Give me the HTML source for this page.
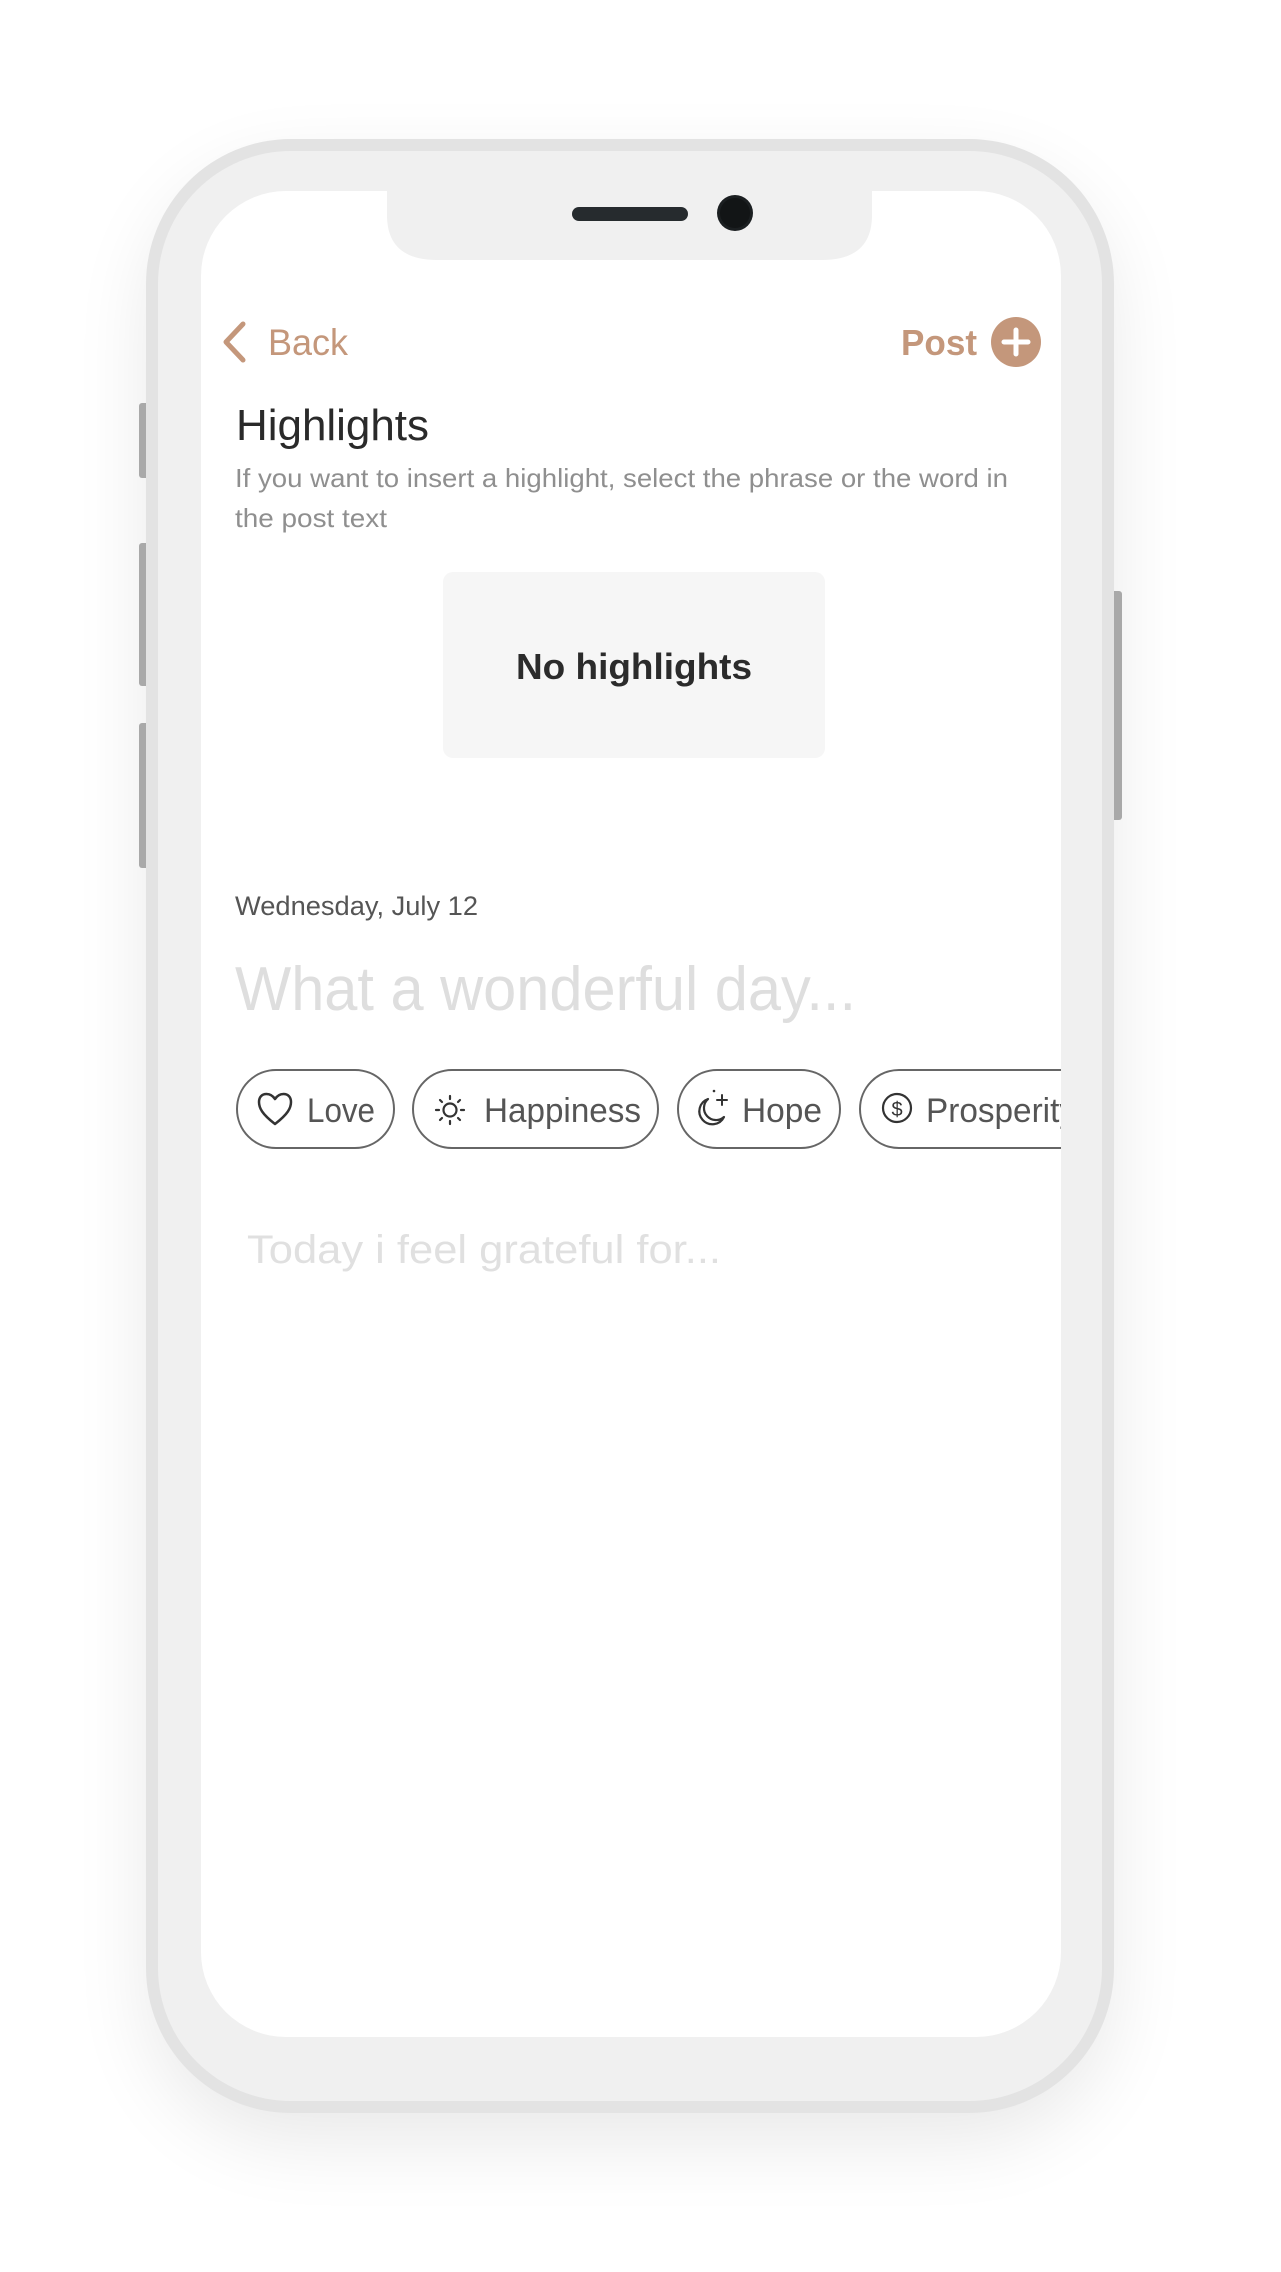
<!DOCTYPE html>
<html><head><meta charset="utf-8"><style>
html,body{margin:0;padding:0;background:#fff;}
body{width:1281px;height:2272px;overflow:hidden;}
svg{display:block;}
text{font-family:"Liberation Sans",sans-serif;}
</style></head><body>
<svg width="1281" height="2272" viewBox="0 0 1281 2272" xmlns="http://www.w3.org/2000/svg">
<defs>
<filter id="sh" x="-30%" y="-30%" width="160%" height="160%"><feGaussianBlur stdDeviation="40"/></filter>
<clipPath id="scr"><rect x="201" y="191" width="860" height="1846" rx="85" ry="85"/></clipPath>
</defs>
<rect width="1281" height="2272" fill="#fff"/>
<rect x="150" y="170" width="960" height="1970" rx="145" fill="#000" opacity="0.09" filter="url(#sh)"/>
<rect x="139" y="403" width="10" height="75" rx="3" fill="#a9a9a9"/>
<rect x="139" y="543" width="10" height="143" rx="3" fill="#a9a9a9"/>
<rect x="139" y="723" width="10" height="145" rx="3" fill="#a9a9a9"/>
<rect x="1111" y="591" width="11" height="229" rx="3" fill="#a9a9a9"/>
<rect x="146" y="139" width="968" height="1974" rx="145" fill="#e3e3e3"/>
<rect x="158" y="151" width="944" height="1950" rx="133" fill="#f0f0f0"/>
<rect x="201" y="191" width="860" height="1846" rx="85" fill="#fff"/>
<path d="M387 191 H872 V215 Q872 260 822 260 H437 Q387 260 387 215 Z" fill="#f0f0f0"/>
<rect x="572" y="207" width="116" height="14" rx="7" fill="#262b2e"/>
<circle cx="735" cy="213" r="18" fill="#1b1f21"/>
<circle cx="735" cy="213" r="15" fill="#121516"/>

<path d="M243 324 L226 342 L243 360" fill="none" stroke="#c4977b" stroke-width="5" stroke-linecap="round" stroke-linejoin="round"/>
<text x="268" y="355" font-size="37" fill="#c4977b" textLength="80" lengthAdjust="spacingAndGlyphs">Back</text>
<text x="901" y="355" font-size="36" font-weight="bold" fill="#c4977b" textLength="76" lengthAdjust="spacingAndGlyphs">Post</text>
<circle cx="1016" cy="342" r="25" fill="#c4977b"/>
<path d="M1016 330 V354 M1004 342 H1028" stroke="#fff" stroke-width="5" stroke-linecap="round"/>

<text x="236" y="440" font-size="44" fill="#2a2a2a" textLength="193" lengthAdjust="spacingAndGlyphs">Highlights</text>
<text x="235" y="487" font-size="26" fill="#8f8f8f" textLength="773" lengthAdjust="spacingAndGlyphs">If you want to insert a highlight, select the phrase or the word in</text>
<text x="235" y="527" font-size="26" fill="#8f8f8f" textLength="152" lengthAdjust="spacingAndGlyphs">the post text</text>

<rect x="443" y="572" width="382" height="186" rx="10" fill="#f6f6f6"/>
<text x="516" y="679" font-size="36" font-weight="bold" fill="#2b2b2b" textLength="236" lengthAdjust="spacingAndGlyphs">No highlights</text>

<text x="235" y="915" font-size="27" fill="#555" textLength="243" lengthAdjust="spacingAndGlyphs">Wednesday, July 12</text>
<text x="235" y="1010" font-size="62" fill="#dedede" textLength="621" lengthAdjust="spacingAndGlyphs">What a wonderful day...</text>

<g clip-path="url(#scr)">
<g fill="none" stroke="#666" stroke-width="2">
<rect x="237" y="1070" width="157" height="78" rx="39"/>
<rect x="413" y="1070" width="245" height="78" rx="39"/>
<rect x="678" y="1070" width="162" height="78" rx="39"/>
<rect x="860" y="1070" width="240" height="78" rx="39"/>
</g>
<path d="M275 1124 C262 1114 259 1108 259 1102 C259 1097 262 1094 266.5 1094 C270 1094 273 1096 275 1099 C277 1096 280 1094 283.5 1094 C288 1094 291 1097 291 1102 C291 1108 288 1114 275 1124Z" fill="none" stroke="#333" stroke-width="2.5" stroke-linejoin="round"/>
<text x="307" y="1122" font-size="34" fill="#555" textLength="68" lengthAdjust="spacingAndGlyphs">Love</text>
<circle cx="450" cy="1110" r="6.5" fill="none" stroke="#333" stroke-width="2.2"/>
<g stroke="#333" stroke-width="2.2" stroke-linecap="round">
<path d="M450 1096 V1099 M450 1121 V1124 M436 1110 H439 M461 1110 H464 M440 1100 L442 1102 M458 1118 L460 1120 M460 1100 L458 1102 M442 1118 L440 1120"/>
</g>
<text x="484" y="1122" font-size="34" fill="#555" textLength="157" lengthAdjust="spacingAndGlyphs">Happiness</text>
<path d="M708 1099 A13 13 0 1 0 724 1117 A10 10 0 0 1 708 1099 Z" fill="none" stroke="#333" stroke-width="2.2" stroke-linejoin="round"/>
<path d="M722 1095 V1105 M717 1100 H727" stroke="#333" stroke-width="2" stroke-linecap="round"/>
<circle cx="714" cy="1091" r="1.3" fill="#333"/>
<text x="742" y="1122" font-size="34" fill="#555" textLength="80" lengthAdjust="spacingAndGlyphs">Hope</text>
<circle cx="897" cy="1108" r="14" fill="none" stroke="#333" stroke-width="2.2"/>
<text x="897" y="1116" font-size="20" fill="#333" text-anchor="middle">$</text>
<text x="926" y="1122" font-size="34" fill="#555" textLength="150" lengthAdjust="spacingAndGlyphs">Prosperity</text>
</g>

<text x="247" y="1263" font-size="40" fill="#e0e0e0" textLength="474" lengthAdjust="spacingAndGlyphs">Today i feel grateful for...</text>
</svg>
</body></html>
